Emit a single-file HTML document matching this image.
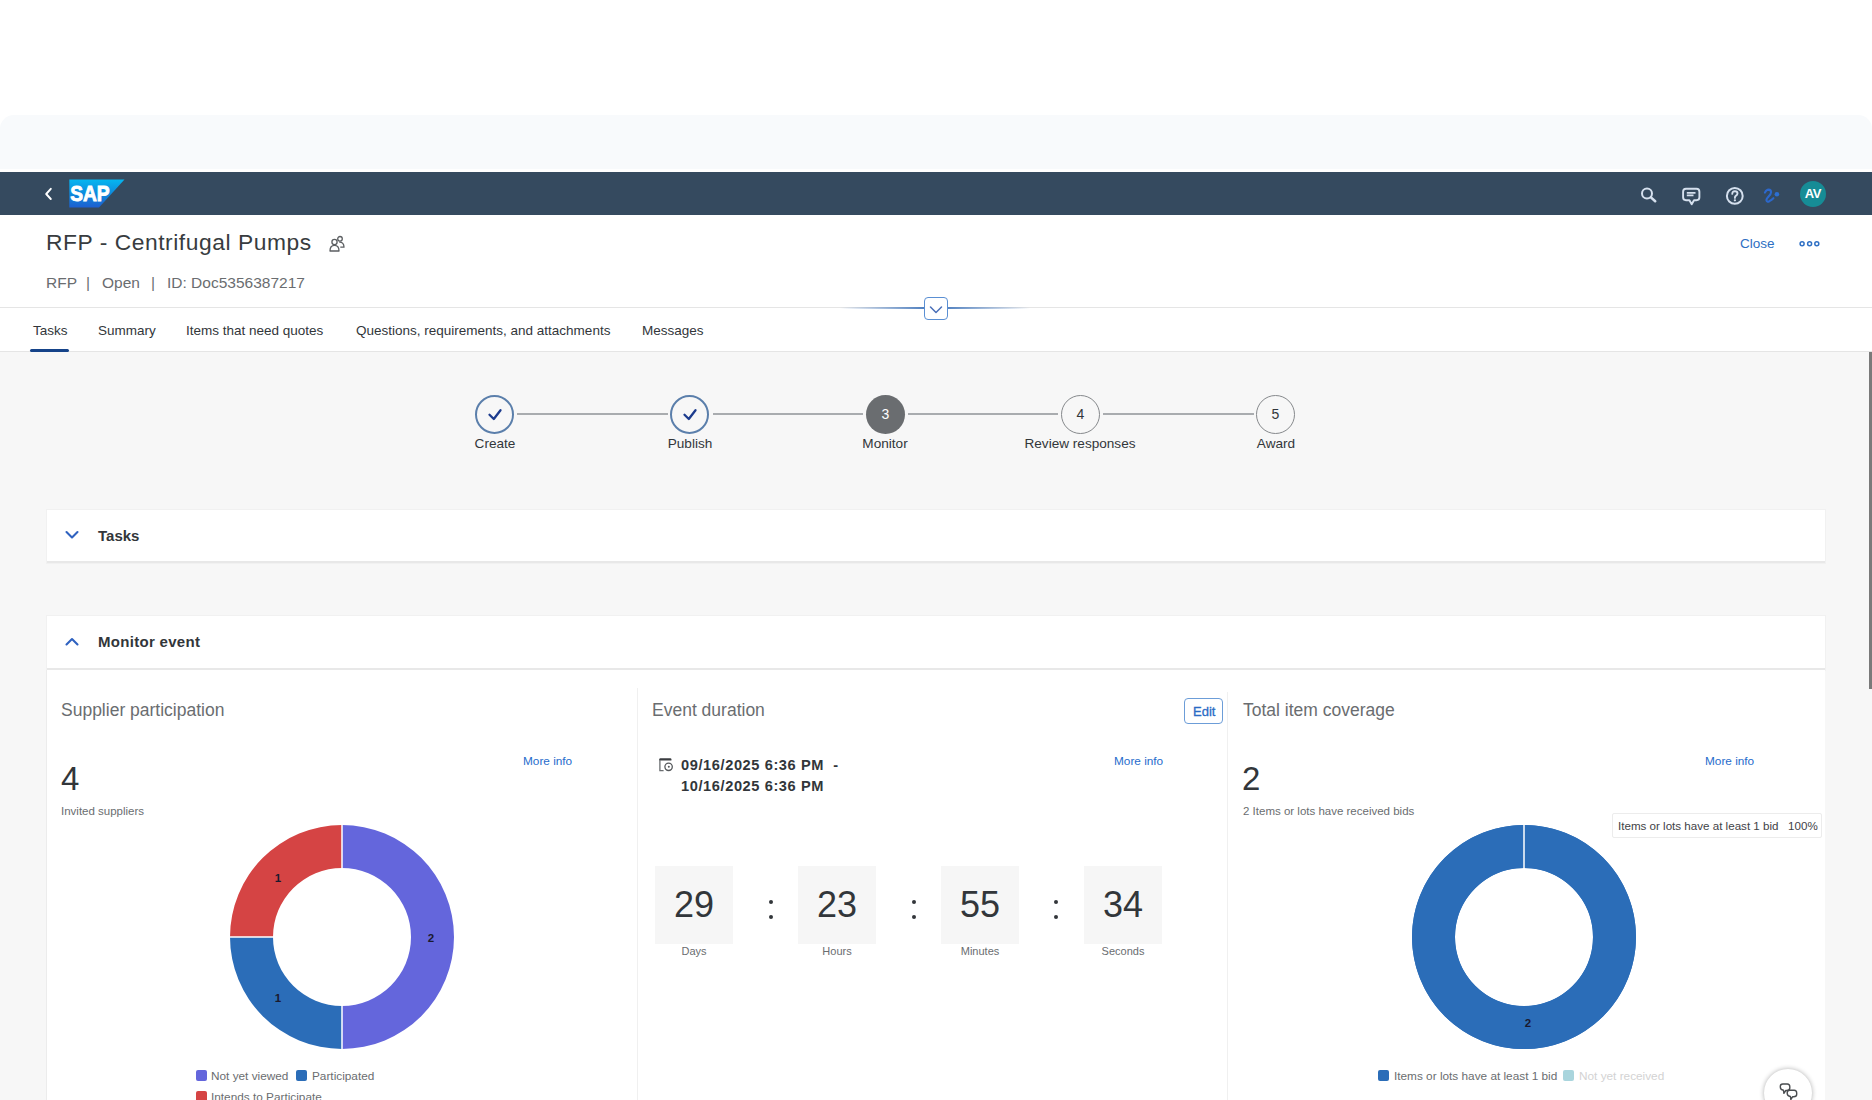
<!DOCTYPE html>
<html><head><meta charset="utf-8">
<style>
*{box-sizing:border-box;margin:0;padding:0}
html,body{width:1872px;height:1100px;overflow:hidden;background:#fff;font-family:"Liberation Sans",sans-serif;color:#32363a}
.abs{position:absolute}
#frame{position:absolute;left:0;top:115px;width:1872px;height:54px;background:#f8fafc;border-top-left-radius:14px;border-top-right-radius:14px}
#shell{position:absolute;left:0;top:172px;width:1872px;height:43px;background:#354a5f}
#hdr{position:absolute;left:0;top:215px;width:1872px;height:93px;background:#fff}
#tabs{position:absolute;left:0;top:307px;width:1872px;height:45px;background:#fff;border-top:1.5px solid #e5e5e5;border-bottom:1.5px solid #e5e5e5}
#content{position:absolute;left:0;top:352px;width:1872px;height:748px;background:#f7f7f7}
.t{position:absolute;white-space:nowrap;line-height:1}
.panel{position:absolute;left:47px;width:1778px;background:#fff;border-bottom:2px solid #e8e8e8;box-shadow:0 0 0 1px #f1f1f1}
.step{position:absolute;width:39px;height:39px;border-radius:50%;top:395px;text-align:center;line-height:36px;font-size:14px}
.sline{position:absolute;height:2px;top:413px;background:#a9acaf}
.slabel{position:absolute;top:437px;font-size:13.6px;line-height:13px;color:#32363a;white-space:nowrap;transform:translateX(-50%)}
.tab{position:absolute;top:324px;font-size:13.5px;line-height:14px;color:#32363a;white-space:nowrap}
.more{position:absolute;font-size:11.8px;line-height:11px;color:#1f6ccc;white-space:nowrap}
.ctitle{position:absolute;top:702px;font-size:17.5px;line-height:17px;color:#6a6d70;white-space:nowrap}
.big{position:absolute;top:762px;font-size:33px;line-height:33px;color:#32363a}
.sub{position:absolute;top:806px;font-size:11.5px;line-height:11px;color:#6a6d70;white-space:nowrap}
.box{position:absolute;top:866px;width:78px;height:78px;background:#f6f6f6;font-size:36px;line-height:78px;text-align:center;color:#32363a}
.blab{position:absolute;top:946px;width:78px;text-align:center;font-size:11px;line-height:11px;color:#6a6d70}
.colon{position:absolute;width:4px;height:4px;border-radius:50%;background:#32363a}
.leg{position:absolute;font-size:11.8px;line-height:11px;color:#6a6d70;white-space:nowrap}
.sq{position:absolute;width:11px;height:11px;border-radius:2px}
</style></head><body>
<div id="frame"></div>
<div id="shell"></div>
<div id="hdr"></div>
<div id="tabs"></div>
<div id="content"></div>

<!-- shell content -->
<svg class="abs" style="left:40px;top:184px" width="16" height="20" viewBox="0 0 16 20"><path d="M10.8 4.8 L6.2 10 L10.8 15" fill="none" stroke="#fff" stroke-width="1.9" stroke-linecap="round" stroke-linejoin="round"/></svg>
<svg class="abs" style="left:69px;top:179px" width="57" height="30" viewBox="0 0 57 30">
<defs><linearGradient id="sapg" x1="0" y1="0" x2="0" y2="1"><stop offset="0" stop-color="#06b6f0"/><stop offset="0.55" stop-color="#0f86db"/><stop offset="1" stop-color="#1d5fd0"/></linearGradient></defs>
<polygon points="0.3,0.6 55.5,0.6 30,28.5 0.3,28.5" fill="url(#sapg)"/>
<text x="1.2" y="22.4" font-family="Liberation Sans" font-weight="bold" font-size="22" fill="#fff" stroke="#fff" stroke-width="0.9" textLength="39.5" lengthAdjust="spacingAndGlyphs">SAP</text>
</svg>
<!-- search -->
<svg class="abs" style="left:1638px;top:185px" width="22" height="22" viewBox="0 0 22 22"><circle cx="9" cy="8.4" r="5" fill="none" stroke="#d5e0ee" stroke-width="2"/><path d="M12.9 12.4 L17.2 16.2" stroke="#d5e0ee" stroke-width="2.6" stroke-linecap="round"/></svg>
<!-- feedback -->
<svg class="abs" style="left:1680px;top:186px" width="22" height="22" viewBox="0 0 22 22"><path d="M6 2.8 H16.5 Q19.4 2.8 19.4 5.7 V11.3 Q19.4 14.2 16.5 14.2 H14 L11.7 18.2 L9.4 14.2 H6 Q3.1 14.2 3.1 11.3 V5.7 Q3.1 2.8 6 2.8 Z" fill="none" stroke="#d5e0ee" stroke-width="1.9" stroke-linejoin="round"/><path d="M6.8 6.9 H15.5 M6.8 9.4 H13.5" stroke="#d5e0ee" stroke-width="1.6"/></svg>
<!-- help -->
<svg class="abs" style="left:1724px;top:185px" width="22" height="22" viewBox="0 0 22 22"><circle cx="10.8" cy="10.9" r="7.9" fill="none" stroke="#d5e0ee" stroke-width="2"/><path d="M8.3 8.9 Q8.2 6.2 10.9 6.2 Q13.5 6.2 13.5 8.5 Q13.5 10 11.8 10.9 Q10.9 11.4 10.9 12.9" fill="none" stroke="#d5e0ee" stroke-width="1.9" stroke-linecap="round"/><circle cx="10.9" cy="15.3" r="1.15" fill="#d5e0ee"/></svg>
<!-- joule squiggle -->
<svg class="abs" style="left:1756px;top:182px" width="30" height="28" viewBox="0 0 30 28"><path d="M8.9 10.6 Q10.4 7.6 12.6 7.6 Q15.1 7.8 15.1 10.2 Q15 12 12.6 14.5 Q10.1 17 10.5 18.6 Q11.2 20.3 13.4 19.2 Q15.6 17.9 17.4 16.2" fill="none" stroke="#2c68cc" stroke-width="2.1" stroke-linecap="round" stroke-linejoin="round"/><circle cx="20.9" cy="12.3" r="2.3" fill="#2c6fd2"/></svg>
<!-- avatar -->
<div class="abs" style="left:1800px;top:181px;width:26px;height:26px;border-radius:50%;background:#168c96;color:#fff;font-size:13px;font-weight:bold;line-height:26px;text-align:center;letter-spacing:-0.2px">AV</div>

<!-- title -->
<div class="t" style="left:46px;top:231px;font-size:22.8px;line-height:23px;color:#383c40;letter-spacing:0.55px">RFP - Centrifugal Pumps</div>
<svg class="abs" style="left:327px;top:234px" width="20" height="20" viewBox="0 0 20 20"><circle cx="7.5" cy="8" r="2.6" fill="none" stroke="#5b5e61" stroke-width="1.3"/><path d="M3 17 Q3 11.3 7.5 11.3 Q12 11.3 12 17 Z" fill="none" stroke="#5b5e61" stroke-width="1.3" stroke-linejoin="round"/><circle cx="13" cy="4.8" r="2.3" fill="none" stroke="#5b5e61" stroke-width="1.3"/><path d="M12.2 8.2 Q17 8 17 13.2 L13.3 13.2" fill="none" stroke="#5b5e61" stroke-width="1.3" stroke-linejoin="round"/></svg>
<div class="t" style="left:46px;top:275px;font-size:15.5px;line-height:15px;color:#6a6d70">RFP</div>
<div class="t" style="left:86px;top:275px;font-size:15.5px;line-height:15px;color:#6a6d70">|</div>
<div class="t" style="left:102px;top:275px;font-size:15.5px;line-height:15px;color:#6a6d70">Open</div>
<div class="t" style="left:151px;top:275px;font-size:15.5px;line-height:15px;color:#6a6d70">|</div>
<div class="t" style="left:167px;top:275px;font-size:15.5px;line-height:15px;color:#6a6d70">ID: Doc5356387217</div>
<div class="t" style="left:1740px;top:237px;font-size:13.5px;line-height:14px;color:#2d6fc3">Close</div>
<svg class="abs" style="left:1797px;top:238px" width="26" height="12" viewBox="0 0 26 12"><circle cx="5.1" cy="5.8" r="2" fill="none" stroke="#2f70c4" stroke-width="1.5"/><circle cx="12.6" cy="5.8" r="2" fill="none" stroke="#2f70c4" stroke-width="1.5"/><circle cx="19.8" cy="5.8" r="2" fill="none" stroke="#2f70c4" stroke-width="1.5"/></svg>

<!-- collapse control -->
<div class="abs" style="left:840px;top:307px;width:190px;height:2px;background:linear-gradient(90deg,rgba(70,120,190,0) 0%,#4f7fbf 45%,#4f7fbf 55%,rgba(70,120,190,0) 100%)"></div>
<div class="abs" style="left:924px;top:297px;width:24px;height:23px;border:1.6px solid #5a8fd3;border-radius:4px;background:#fff"></div>
<svg class="abs" style="left:924px;top:297px" width="24" height="23" viewBox="0 0 24 23"><path d="M6.5 10 L12 15.5 L17.5 10" fill="none" stroke="#4a6fb8" stroke-width="1.5" stroke-linecap="round" stroke-linejoin="round"/></svg>

<!-- tabs -->
<div class="tab" style="left:33px">Tasks</div>
<div class="abs" style="left:30px;top:349px;width:39px;height:3px;background:#154389;border-radius:2px"></div>
<div class="tab" style="left:98px">Summary</div>
<div class="tab" style="left:186px">Items that need quotes</div>
<div class="tab" style="left:356px">Questions, requirements, and attachments</div>
<div class="tab" style="left:642px">Messages</div>

<!-- scrollbar -->
<div class="abs" style="left:1869px;top:352px;width:3px;height:337px;background:#7a7a7a"></div>

<!-- steps -->
<div class="sline" style="left:517px;width:151px"></div>
<div class="sline" style="left:713px;width:150px"></div>
<div class="sline" style="left:908px;width:150px"></div>
<div class="sline" style="left:1103px;width:151px"></div>
<div class="step" style="left:475px;border:2px solid #5b7fab"><svg width="36" height="36" viewBox="0 0 36 36" style="position:absolute;left:0;top:0"><path d="M12.5 17.8 L16.8 22 L23.5 13.2" fill="none" stroke="#1d3c8e" stroke-width="2.3" stroke-linecap="round" stroke-linejoin="round"/></svg></div>
<div class="step" style="left:670px;border:2px solid #5b7fab"><svg width="36" height="36" viewBox="0 0 36 36" style="position:absolute;left:0;top:0"><path d="M12.5 17.8 L16.8 22 L23.5 13.2" fill="none" stroke="#1d3c8e" stroke-width="2.3" stroke-linecap="round" stroke-linejoin="round"/></svg></div>
<div class="step" style="left:866px;background:#6a6d70;color:#fff;line-height:39px">3</div>
<div class="step" style="left:1061px;border:1.8px solid #86898c;color:#32363a">4</div>
<div class="step" style="left:1256px;border:1.8px solid #86898c;color:#32363a">5</div>
<div class="slabel" style="left:495px">Create</div>
<div class="slabel" style="left:690px">Publish</div>
<div class="slabel" style="left:885px">Monitor</div>
<div class="slabel" style="left:1080px">Review responses</div>
<div class="slabel" style="left:1276px">Award</div>

<!-- panels -->
<div class="panel" style="top:510px;height:53px"></div>
<svg class="abs" style="left:62px;top:526px" width="20" height="18" viewBox="0 0 20 18"><path d="M4.5 6 L10 11.5 L15.5 6" fill="none" stroke="#2f62c0" stroke-width="2.1" stroke-linecap="round" stroke-linejoin="round"/></svg>
<div class="t" style="left:98px;top:528px;font-size:15px;line-height:15px;font-weight:bold;color:#32363a">Tasks</div>
<div class="panel" style="top:616px;height:54px"></div>
<svg class="abs" style="left:62px;top:632px" width="20" height="18" viewBox="0 0 20 18"><path d="M4.5 12.5 L10 7 L15.5 12.5" fill="none" stroke="#2f62c0" stroke-width="2.1" stroke-linecap="round" stroke-linejoin="round"/></svg>
<div class="t" style="left:98px;top:634px;font-size:15px;line-height:15px;font-weight:bold;letter-spacing:0.3px;color:#32363a">Monitor event</div>
<div class="abs" style="left:46px;top:670px;width:1779px;height:430px;background:#fff;border-left:1px solid #ececec"></div>
<div class="abs" style="left:637px;top:688px;width:1px;height:412px;background:#f0f0f0"></div>
<div class="abs" style="left:1227px;top:692px;width:1px;height:408px;background:#f0f0f0"></div>

<!-- card 1 -->
<div class="ctitle" style="left:61px">Supplier participation</div>
<div class="more" style="left:523px;top:756px">More info</div>
<div class="big" style="left:61px">4</div>
<div class="sub" style="left:61px">Invited suppliers</div>
<svg class="abs" style="left:222px;top:817px" width="240" height="240" viewBox="-120 -120 240 240">
<path d="M0 -112 A112 112 0 0 1 0 112 L0 69 A69 69 0 0 0 0 -69 Z" fill="#6466dc"/>
<path d="M0 112 A112 112 0 0 1 -112 0 L-69 0 A69 69 0 0 0 0 69 Z" fill="#2b6db8"/>
<path d="M-112 0 A112 112 0 0 1 0 -112 L0 -69 A69 69 0 0 0 -69 0 Z" fill="#d54444"/>
<path d="M0 -113 V-68 M0 113 V68 M-113 0 H-68" stroke="#fff" stroke-width="1.5"/>
<text x="-64" y="-55.5" font-family="Liberation Sans" font-weight="bold" font-size="11.5" fill="#1a1a2e" text-anchor="middle">1</text>
<text x="89" y="5" font-family="Liberation Sans" font-weight="bold" font-size="11.5" fill="#1a1a2e" text-anchor="middle">2</text>
<text x="-64" y="65" font-family="Liberation Sans" font-weight="bold" font-size="11.5" fill="#1a1a2e" text-anchor="middle">1</text>
</svg>
<div class="sq" style="left:196px;top:1070px;background:#6466dc"></div>
<div class="leg" style="left:211px;top:1071px">Not yet viewed</div>
<div class="sq" style="left:296px;top:1070px;background:#2b6db8"></div>
<div class="leg" style="left:312px;top:1071px">Participated</div>
<div class="sq" style="left:196px;top:1091px;background:#d54444"></div>
<div class="leg" style="left:211px;top:1092px">Intends to Participate</div>

<!-- card 2 -->
<div class="ctitle" style="left:652px">Event duration</div>
<div class="abs" style="left:1184px;top:698px;width:39px;height:26px;border:1.9px solid #6c9dd8;border-radius:4px"></div>
<div class="t" style="left:1193px;top:705px;font-size:13px;line-height:13px;color:#2a6bc4;-webkit-text-stroke:0.3px #2a6bc4">Edit</div>
<svg class="abs" style="left:657px;top:756px" width="18" height="18" viewBox="0 0 18 18"><path d="M2.3 3.3 Q2.3 2.2 3.4 2.2 H13.3 Q14.4 2.2 14.4 3.3 V4.6 H2.3 Z" fill="#3a3d40"/><path d="M2.9 4 V14.6 H6.6" fill="none" stroke="#6a6d70" stroke-width="1.3"/><circle cx="11.6" cy="10.8" r="3.7" fill="none" stroke="#55585b" stroke-width="1.3"/><circle cx="11.8" cy="10.7" r="1" fill="#55585b"/></svg>
<div class="t" style="left:681px;top:758px;font-size:14.6px;line-height:15px;font-weight:bold;letter-spacing:0.6px;color:#32363a">09/16/2025 6:36 PM &nbsp;-</div>
<div class="t" style="left:681px;top:779px;font-size:14.6px;line-height:15px;font-weight:bold;letter-spacing:0.6px;color:#32363a">10/16/2025 6:36 PM</div>
<div class="more" style="left:1114px;top:756px">More info</div>
<div class="box" style="left:655px">29</div>
<div class="box" style="left:798px">23</div>
<div class="box" style="left:941px">55</div>
<div class="box" style="left:1084px">34</div>
<div class="blab" style="left:655px">Days</div>
<div class="blab" style="left:798px">Hours</div>
<div class="blab" style="left:941px">Minutes</div>
<div class="blab" style="left:1084px">Seconds</div>
<div class="colon" style="left:769px;top:900px"></div><div class="colon" style="left:769px;top:915px"></div>
<div class="colon" style="left:912px;top:900px"></div><div class="colon" style="left:912px;top:915px"></div>
<div class="colon" style="left:1054px;top:900px"></div><div class="colon" style="left:1054px;top:915px"></div>

<!-- card 3 -->
<div class="ctitle" style="left:1243px">Total item coverage</div>
<div class="more" style="left:1705px;top:756px">More info</div>
<div class="big" style="left:1242px">2</div>
<div class="sub" style="left:1243px">2 Items or lots have received bids</div>
<div class="abs" style="left:1612px;top:813px;width:210px;height:25px;border:1px solid #ececec;border-radius:2px;background:#fff"></div>
<div class="t" style="left:1618px;top:820px;font-size:11.6px;line-height:12px;color:#3f4347">Items or lots have at least 1 bid &nbsp;&nbsp;100%</div>
<svg class="abs" style="left:1404px;top:817px" width="240" height="240" viewBox="-120 -120 240 240">
<path d="M0 -112 A112 112 0 1 1 -0.01 -112 L-0.01 -69 A69 69 0 1 0 0 -69 Z" fill="#2b6db8" fill-rule="evenodd"/>
<circle cx="0" cy="0" r="90.5" fill="none" stroke="#2b6db8" stroke-width="43"/>
<path d="M0 -113 V-68" stroke="#fff" stroke-width="1.5"/>
<text x="4" y="90" font-family="Liberation Sans" font-weight="bold" font-size="11.5" fill="#1a1a2e" text-anchor="middle">2</text>
</svg>
<div class="sq" style="left:1378px;top:1070px;background:#2b6db8"></div>
<div class="leg" style="left:1394px;top:1071px">Items or lots have at least 1 bid</div>
<div class="sq" style="left:1563px;top:1070px;background:#a9d5dd"></div>
<div class="leg" style="left:1579px;top:1071px;color:#d3d3d3">Not yet received</div>

<!-- feedback button -->
<div class="abs" style="left:1764px;top:1069px;width:48px;height:48px;border-radius:50%;background:#fff;box-shadow:0 0 5px rgba(0,0,0,0.32)"></div>
<svg class="abs" style="left:1776px;top:1080px" width="24" height="20" viewBox="0 0 24 20"><path d="M6.8 4 H11.3 Q13.8 4 13.8 6.8 V8 Q13.8 10.5 10.8 10.5 H9.8 L7.9 13.3 L7.5 10.3 Q4.3 9.8 4.3 7 V6.6 Q4.3 4 6.8 4 Z" fill="none" stroke="#4a4d50" stroke-width="1.4" stroke-linejoin="round"/><path d="M13.7 10.2 H18.2 Q20.7 10.2 20.7 13.0 V14.2 Q20.7 16.7 17.7 16.7 H16.7 L14.799999999999999 19.5 L14.399999999999999 16.5 Q11.2 16.0 11.2 13.2 V12.799999999999999 Q11.2 10.2 13.7 10.2 Z" fill="#fff" stroke="#4a4d50" stroke-width="1.4" stroke-linejoin="round"/></svg>
</body></html>
